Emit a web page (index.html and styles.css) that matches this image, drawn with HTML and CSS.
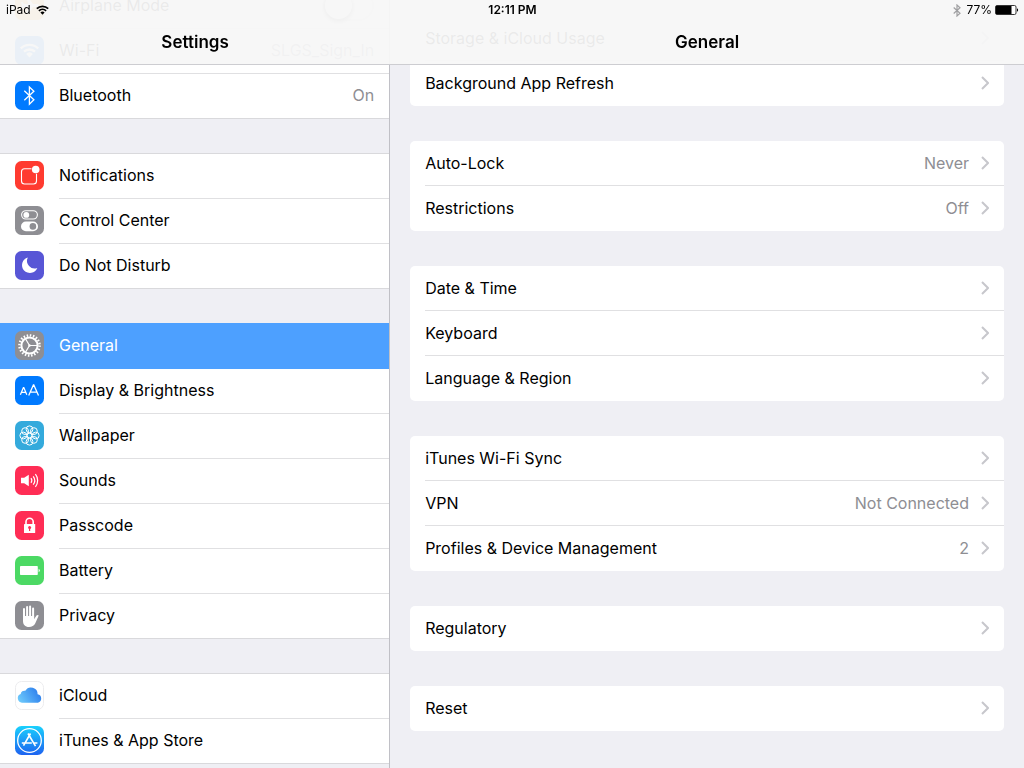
FILE: index.html
```html
<!DOCTYPE html>
<html lang="en">
<head>
<meta charset="utf-8">
<meta name="viewport" content="width=device-width, initial-scale=1">
<title>Settings</title>
<link rel="stylesheet" href="styles.css">
</head>
<body>
<header class="topbar">
  <div class="status">
    <div class="status-left">
      <span>iPad</span>
      <svg width="13" height="10" viewBox="0 0 13 10" fill="none" stroke="#000" stroke-width="1.7"><path d="M.8 3.6a8.2 8.2 0 0 1 11.4 0M2.9 5.8a5.2 5.2 0 0 1 7.2 0"/><path d="M6.5 9.8 4.4 7.5a3 3 0 0 1 4.2 0z" fill="#000" stroke="none"/></svg>
    </div>
    <time class="clock">12:11 PM</time>
    <div class="status-right">
      <svg width="8" height="13" viewBox="0 0 8 13" fill="none" stroke="#a0a0a2" stroke-width="1.2"><path d="M.7 3.5 7 9.3 4 12V1l3 2.7L.7 9.5"/></svg>
      <span class="charge">77%
        <svg width="24" height="10" viewBox="0 0 24 10"><rect x=".5" y=".5" width="20.500" height="9" rx="1.500" fill="#fff" stroke="#333"/><path d="M1 1h15.500v8H1z"/><path d="M22 3.200a2 2 0 0 1 0 3.600z"/></svg>
      </span>
    </div>
  </div>
  <div class="titles">
    <h1 class="title">Settings</h1>
    <h2 class="title">General</h2>
  </div>
</header>

<div class="split">
  <nav class="sidebar" aria-label="Settings">
    <div class="group">
      <label class="item">
        <svg class="icon" viewBox="0 0 29 29"><rect width="29" height="29" rx="6.500" fill="#ff9500"/><path d="M24 14.500c0-1-1-1.500-2-1.500h-4l-5-7h-2l2.500 7H9l-1.500-2H6l1 3.500L6 18h1.500L9 16h4.500L11 23h2l5-7h4c1 0 2-.5 2-1.500z" fill="#fff"/></svg>
        <span class="item-body"><span class="name">Airplane Mode</span><input class="switch" type="checkbox" role="switch"></span>
      </label>
      <a class="item" href="#wifi">
        <svg class="icon" viewBox="0 0 29 29"><rect width="29" height="29" rx="6.500" fill="#007aff"/><path d="M5.800 12.300a12.500 12.500 0 0 1 17.400 0M9 15.700a8 8 0 0 1 11 0" fill="none" stroke="#fff" stroke-width="2.300"/><path d="m14.500 21.500-3.300-3.600a4.800 4.800 0 0 1 6.600 0z" fill="#fff"/></svg>
        <span class="item-body"><span class="name">Wi-Fi</span><span class="value">SLGS_Sign_In</span></span>
      </a>
      <a class="item" href="#bluetooth">
        <svg class="icon" viewBox="0 0 29 29"><rect width="29" height="29" rx="6.500" fill="#007aff"/><path d="m9.300 9.800 9.600 9-4.500 4.400V6l4.500 4.200-9.600 9" fill="none" stroke="#fff" stroke-width="1.300"/></svg>
        <span class="item-body"><span class="name">Bluetooth</span><span class="value">On</span></span>
      </a>
    </div>

    <div class="group">
      <a class="item" href="#notifications">
        <svg class="icon" viewBox="0 0 29 29"><rect width="29" height="29" rx="6.500" fill="#ff3b30"/><path d="M16.500 7.700H9.500a3 3 0 0 0-3 3v9.300a3 3 0 0 0 3 3h9a3 3 0 0 0 3-3v-7.300" fill="none" stroke="#fff" stroke-width="1.100"/><circle cx="20.700" cy="8.500" r="3.800" fill="#fff"/></svg>
        <span class="item-body"><span class="name">Notifications</span></span>
      </a>
      <a class="item" href="#control-center">
        <svg class="icon" viewBox="0 0 29 29"><rect width="29" height="29" rx="6.500" fill="#8e8e93"/><rect x="6.600" y="4.700" width="15.800" height="8.300" rx="4.150" fill="none" stroke="#fff" stroke-width="1.100"/><circle cx="11.300" cy="8.900" r="2.900" fill="#fff"/><rect x="6" y="15.500" width="17" height="9.800" rx="4.900" fill="#fff"/><circle cx="17.900" cy="20.400" r="3.300" fill="#8e8e93"/></svg>
        <span class="item-body"><span class="name">Control Center</span></span>
      </a>
      <a class="item" href="#do-not-disturb">
        <svg class="icon" viewBox="0 0 29 29"><rect width="29" height="29" rx="6.500" fill="#5856d6"/><path d="M12.800 6.500a7.900 7.900 0 1 0 9.500 10.400A7.600 7.600 0 0 1 12.800 6.500z" fill="#fff"/></svg>
        <span class="item-body"><span class="name">Do Not Disturb</span></span>
      </a>
    </div>

    <div class="group">
      <a class="item item-selected" href="#general" aria-current="page">
        <svg class="icon" viewBox="0 0 29 29"><rect width="29" height="29" rx="6.500" fill="#8e8e93"/><g fill="none" stroke="#fff"><circle cx="14.500" cy="14.500" r="10.100" stroke-width="2.400" stroke-dasharray="1.500 1.673"/><circle cx="14.500" cy="14.500" r="8.100" stroke-width="2"/><path d="M14.500 14.500h7.500M14.500 14.500l-3.800-6.400M14.500 14.500l-3.800 6.400" stroke-width="1.100"/></g><circle cx="14.500" cy="14.500" r="1.200" fill="#fff"/></svg>
        <span class="item-body"><span class="name">General</span></span>
      </a>
      <a class="item" href="#display">
        <svg class="icon" viewBox="0 0 29 29"><rect width="29" height="29" rx="6.500" fill="#007aff"/><path d="m5.400 18.800 3-7.300h.4l3 7.300M6.500 16.400h4.200M13.700 19.500l4.700-10.600h.4l4.700 10.600M15.300 16h6.600" fill="none" stroke="#fff" stroke-width="1.250"/></svg>
        <span class="item-body"><span class="name">Display &amp; Brightness</span></span>
      </a>
      <a class="item" href="#wallpaper">
        <svg class="icon" viewBox="0 0 29 29"><rect width="29" height="29" rx="6.500" fill="#34aadc"/><g fill="none" stroke="#fff" stroke-width="1"><circle cx="14.500" cy="14.500" r="2.300"/><circle cx="14.500" cy="8.300" r="3.400"/><circle cx="18.900" cy="10.100" r="3.400"/><circle cx="20.700" cy="14.500" r="3.400"/><circle cx="18.900" cy="18.900" r="3.400"/><circle cx="14.500" cy="20.700" r="3.400"/><circle cx="10.100" cy="18.900" r="3.400"/><circle cx="8.300" cy="14.500" r="3.400"/><circle cx="10.100" cy="10.100" r="3.400"/></g></svg>
        <span class="item-body"><span class="name">Wallpaper</span></span>
      </a>
      <a class="item" href="#sounds">
        <svg class="icon" viewBox="0 0 29 29"><rect width="29" height="29" rx="6.500" fill="#ff2d55"/><path d="M6 11.800h3.200l4.600-3v11.400l-4.600-3H6z" fill="#fff"/><path d="M16 12.200c1 1.400 1 3.200 0 4.600M18.200 10.300c1.900 2.500 1.900 5.900 0 8.400M20.400 8.200c3 3.700 3 8.900 0 12.600" fill="none" stroke="#fff" stroke-width="1.200"/></svg>
        <span class="item-body"><span class="name">Sounds</span></span>
      </a>
      <a class="item" href="#passcode">
        <svg class="icon" viewBox="0 0 29 29"><rect width="29" height="29" rx="6.500" fill="#ff2d55"/><path d="M11 13.500v-2.700a3.600 3.600 0 0 1 7.200 0v2.700" fill="none" stroke="#fff" stroke-width="1.600"/><rect x="9" y="13" width="11.200" height="9" rx=".6" fill="#fff"/><path d="M14.600 17v3" stroke="#ff2d55" stroke-width="1.200"/><circle cx="14.600" cy="16.500" r="1.500" fill="#ff2d55"/></svg>
        <span class="item-body"><span class="name">Passcode</span></span>
      </a>
      <a class="item" href="#battery">
        <svg class="icon" viewBox="0 0 29 29"><rect width="29" height="29" rx="6.500" fill="#4cd964"/><rect x="5" y="10" width="17.800" height="9" rx=".8" fill="#fff"/><path d="M23.600 12.800a1.800 1.800 0 0 1 0 3.400z" fill="#fff"/></svg>
        <span class="item-body"><span class="name">Battery</span></span>
      </a>
      <a class="item" href="#privacy">
        <svg class="icon" viewBox="0 0 29 29"><rect width="29" height="29" rx="6.500" fill="#8e8e93"/><g fill="none" stroke="#fff" stroke-width="2" stroke-linecap="round"><path d="M9 8v10M12.100 6v10M15.100 5.500V16M18.100 7.500V18"/></g><path d="M8 15h11.100v3.300l2.400-3.800c.7-.8 1.900-.6 2.200 0l-3.400 7.800c-1.300 2.600-3.400 3.700-6.300 3.700-4 0-6-2.500-6-6z" fill="#fff"/></svg>
        <span class="item-body"><span class="name">Privacy</span></span>
      </a>
    </div>

    <div class="group">
      <a class="item" href="#icloud">
        <svg class="icon" viewBox="0 0 29 29"><defs><linearGradient id="cloud" x1="0" y1=".7" x2="1" y2=".3"><stop offset="0" stop-color="#6cc8fb"/><stop offset="1" stop-color="#2a7bec"/></linearGradient></defs><rect x=".5" y=".5" width="28" height="28" rx="6" fill="#fff" stroke="#ececee"/><path d="M7 21.700a4.500 4.500 0 0 1-1.300-8.700 3.600 3.600 0 0 1 4.600-3.200 6.600 6.600 0 0 1 12.300 3.500 4.300 4.300 0 0 1 .4 8.400z" fill="url(#cloud)"/></svg>
        <span class="item-body"><span class="name">iCloud</span></span>
      </a>
      <a class="item" href="#itunes">
        <svg class="icon" viewBox="0 0 29 29"><defs><linearGradient id="store" x1="0" y1="0" x2="0" y2="1"><stop offset="0" stop-color="#1ad1fd"/><stop offset="1" stop-color="#1d62f0"/></linearGradient></defs><rect width="29" height="29" rx="6.500" fill="url(#store)"/><g fill="none" stroke="#fff"><circle cx="14.500" cy="14.500" r="11.800" stroke-width="1.300"/><path d="m15.500 7.500-7 12.200M13 7.500l7.500 12.700M6.800 17h10M18.800 17h3.600" stroke-width="1.600"/></g></svg>
        <span class="item-body"><span class="name">iTunes &amp; App Store</span></span>
      </a>
    </div>
  </nav>

  <main class="detail">
    <div class="card">
      <a class="row" href="#storage"><span class="name">Storage &amp; iCloud Usage</span><svg class="chevron" viewBox="0 0 8 14"><path d="m1 1 6 6-6 6"/></svg></a>
      <a class="row" href="#refresh"><span class="name">Background App Refresh</span><svg class="chevron" viewBox="0 0 8 14"><path d="m1 1 6 6-6 6"/></svg></a>
    </div>
    <div class="card">
      <a class="row" href="#auto-lock"><span class="name">Auto-Lock</span><span class="value">Never</span><svg class="chevron" viewBox="0 0 8 14"><path d="m1 1 6 6-6 6"/></svg></a>
      <a class="row" href="#restrictions"><span class="name">Restrictions</span><span class="value">Off</span><svg class="chevron" viewBox="0 0 8 14"><path d="m1 1 6 6-6 6"/></svg></a>
    </div>
    <div class="card">
      <a class="row" href="#date"><span class="name">Date &amp; Time</span><svg class="chevron" viewBox="0 0 8 14"><path d="m1 1 6 6-6 6"/></svg></a>
      <a class="row" href="#keyboard"><span class="name">Keyboard</span><svg class="chevron" viewBox="0 0 8 14"><path d="m1 1 6 6-6 6"/></svg></a>
      <a class="row" href="#language"><span class="name">Language &amp; Region</span><svg class="chevron" viewBox="0 0 8 14"><path d="m1 1 6 6-6 6"/></svg></a>
    </div>
    <div class="card">
      <a class="row" href="#sync"><span class="name">iTunes Wi-Fi Sync</span><svg class="chevron" viewBox="0 0 8 14"><path d="m1 1 6 6-6 6"/></svg></a>
      <a class="row" href="#vpn"><span class="name">VPN</span><span class="value">Not Connected</span><svg class="chevron" viewBox="0 0 8 14"><path d="m1 1 6 6-6 6"/></svg></a>
      <a class="row" href="#profiles"><span class="name">Profiles &amp; Device Management</span><span class="value">2</span><svg class="chevron" viewBox="0 0 8 14"><path d="m1 1 6 6-6 6"/></svg></a>
    </div>
    <div class="card">
      <a class="row" href="#regulatory"><span class="name">Regulatory</span><svg class="chevron" viewBox="0 0 8 14"><path d="m1 1 6 6-6 6"/></svg></a>
    </div>
    <div class="card">
      <a class="row" href="#reset"><span class="name">Reset</span><svg class="chevron" viewBox="0 0 8 14"><path d="m1 1 6 6-6 6"/></svg></a>
    </div>
  </main>
</div>
</body>
</html>
```

FILE: styles.css
```css
* {
  box-sizing: border-box;
}

body {
  margin: 0;
  background: #efeff4;
  color: #000;
  font-family: Inter, Roboto, "Liberation Sans", sans-serif;
  font-size: 16px;
  line-height: 18px;
}

a {
  color: inherit;
  text-decoration: none;
}

.topbar {
  position: fixed;
  top: 0;
  left: 0;
  right: 0;
  z-index: 1;
  background: rgba(247, 247, 247, 0.95);
  border-bottom: 1px solid #cdcdd1;
}

.status {
  display: grid;
  grid-template-columns: 1fr auto 1fr;
  align-items: center;
  height: 20px;
  padding: 0 5px 0 6px;
  font-size: 12px;
}

.status-left,
.status-right,
.charge {
  display: flex;
  align-items: center;
  gap: 5px;
}

.status-right {
  justify-content: flex-end;
}

.charge {
  gap: 3px;
}

.clock {
  font-weight: 600;
}

.titles,
.split {
  display: grid;
  grid-template-columns: 38.1% 1fr;
}

.title {
  margin: 0;
  font-size: 17px;
  font-weight: 600;
  line-height: 44px;
  text-align: center;
}

.split {
  height: 100vh;
  overflow: hidden;
}

/* The list is scrolled part of the way down */
.sidebar {
  display: flex;
  flex-direction: column;
  gap: 34px;
  margin-top: -17px;
  border-right: 1px solid #c0c0c6;
}

.group {
  background: #fff;
  border-top: 1px solid #d9d9dc;
  border-bottom: 1px solid #d9d9dc;
}

.item {
  display: flex;
  align-items: flex-start;
  gap: 15px;
  height: 45px;
  padding-left: 15px;
}

.item:last-child {
  height: 44px;
}

.icon {
  flex: none;
  width: 29px;
  height: 29px;
  margin-top: 7px;
}

.item-body {
  display: flex;
  flex: 1;
  align-items: center;
  align-self: stretch;
  padding: 0 15px 2px 0;
  border-bottom: 1px solid #e0e0e2;
}

.item:last-child .item-body {
  border-bottom: 0;
}

.item-selected {
  height: 46px;
  margin-top: -1px;
  padding-top: 1px;
  background: #4da0ff;
  color: #fff;
}

.item-selected .item-body {
  border-bottom-color: #4da0ff;
}

.name {
  flex: 1;
}

.value {
  color: #8e8e93;
}

.switch {
  appearance: none;
  width: 51px;
  height: 31px;
  margin: 0;
  border: 2px solid #e5e5e5;
  border-radius: 16px;
}

.switch::before {
  content: "";
  display: block;
  width: 27px;
  height: 27px;
  border-radius: 50%;
  background: #fff;
  box-shadow: 0 2px 4px 1px #888;
}

.detail {
  display: flex;
  flex-direction: column;
  gap: 35px;
  padding: 16px 20px 35px;
}

.card {
  padding-left: 15px;
  border-radius: 5px;
  background: #fff;
}

.row {
  display: flex;
  align-items: center;
  height: 45px;
  padding-right: 15px;
  border-bottom: 1px solid #e0e0e2;
}

.row:last-child {
  border-bottom-color: transparent;
}

.row .name,
.row .value {
  padding-bottom: 1px;
}

.chevron {
  width: 8px;
  height: 14px;
  margin-left: 12px;
  fill: none;
  stroke: #c7c7cc;
  stroke-width: 2;
}
```
